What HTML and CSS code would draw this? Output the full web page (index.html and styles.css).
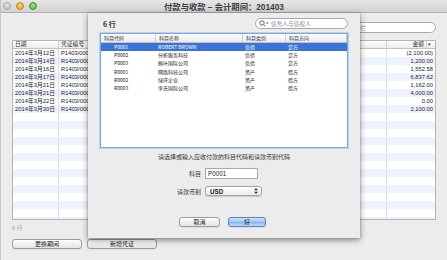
FILE: index.html
```html
<!DOCTYPE html>
<html lang="zh">
<head>
  <meta charset="UTF-8" />
  <title>付款与收款</title>
  <link rel="stylesheet" href="styles.css">
</head>
<body>

  <div class="window">
    <div class="titlebar">
      <div class="lights">
        <span class="light close"></span>
        <span class="light min"></span>
        <span class="light zoom"></span>
      </div>
      <div class="title">付款与收款 – 会计期间：201403</div>
      <div></div>
    </div>

    <div class="content">
      <!-- toolbar -->
      <div class="toolbar">
        <div class="search main-search">
          <svg width="10" height="7" viewBox="0 0 10 7"><circle cx="3" cy="3" r="2.2" fill="none" stroke="#666" stroke-width="0.9"/><path d="M4.6 4.6L6.2 6.2" stroke="#666" stroke-width="1"/><path d="M7 2.5h2.4L8.2 3.9z" fill="#666"/></svg>
          <span>搜索日期或备注所在栏</span>
        </div>
      </div>

      <!-- vouchers -->
      <div class="grid">
        <div class="grid-head">
          <div class="cell">日期</div>
          <div class="cell">凭证编号</div>
          <div class="cell"></div>
          <div class="cell amt">金额</div>
          <div class="cell menu">▾</div>
        </div>
        <div class="grid-body">
          <div class="row"><div class="cell">2014年3月12日</div><div class="cell">P1403/0001</div><div class="cell"></div><div class="cell amt">(2,100.00)</div></div>
          <div class="row"><div class="cell">2014年3月14日</div><div class="cell">R1403/0001</div><div class="cell"></div><div class="cell amt">1,200.00</div></div>
          <div class="row"><div class="cell">2014年3月16日</div><div class="cell">R1403/0002</div><div class="cell"></div><div class="cell amt">1,552.58</div></div>
          <div class="row"><div class="cell">2014年3月17日</div><div class="cell">R1403/0003</div><div class="cell"></div><div class="cell amt">6,837.62</div></div>
          <div class="row"><div class="cell">2014年3月21日</div><div class="cell">R1403/0004</div><div class="cell"></div><div class="cell amt">1,162.00</div></div>
          <div class="row"><div class="cell">2014年3月21日</div><div class="cell">R1403/0005</div><div class="cell"></div><div class="cell amt">4,000.00</div></div>
          <div class="row"><div class="cell">2014年3月22日</div><div class="cell">R1403/0006</div><div class="cell"></div><div class="cell amt">0.00</div></div>
          <div class="row"><div class="cell">2014年3月30日</div><div class="cell">R1403/0007</div><div class="cell"></div><div class="cell amt">2,100.00</div></div>
          <div class="row"><div class="cell"></div><div class="cell"></div><div class="cell"></div><div class="cell"></div></div>
          <div class="row"><div class="cell"></div><div class="cell"></div><div class="cell"></div><div class="cell"></div></div>
          <div class="row"><div class="cell"></div><div class="cell"></div><div class="cell"></div><div class="cell"></div></div>
          <div class="row"><div class="cell"></div><div class="cell"></div><div class="cell"></div><div class="cell"></div></div>
          <div class="row"><div class="cell"></div><div class="cell"></div><div class="cell"></div><div class="cell"></div></div>
          <div class="row"><div class="cell"></div><div class="cell"></div><div class="cell"></div><div class="cell"></div></div>
          <div class="row"><div class="cell"></div><div class="cell"></div><div class="cell"></div><div class="cell"></div></div>
          <div class="row"><div class="cell"></div><div class="cell"></div><div class="cell"></div><div class="cell"></div></div>
          <div class="row"><div class="cell"></div><div class="cell"></div><div class="cell"></div><div class="cell"></div></div>
          <div class="row"><div class="cell"></div><div class="cell"></div><div class="cell"></div><div class="cell"></div></div>
          <div class="row"><div class="cell"></div><div class="cell"></div><div class="cell"></div><div class="cell"></div></div>
          <div class="row"><div class="cell"></div><div class="cell"></div><div class="cell"></div><div class="cell"></div></div>
          <div class="row"><div class="cell"></div><div class="cell"></div><div class="cell"></div><div class="cell"></div></div>
          <div class="row"><div class="cell"></div><div class="cell"></div><div class="cell"></div><div class="cell"></div></div>
        </div>
      </div>

      <div class="count">6 行</div>

      <div class="actions">
        <button class="btn wide">更换期间</button>
        <button class="btn wide">新增凭证</button>
      </div>
    </div>

    <!-- Sheet -->
    <div class="sheet">
      <div class="sheet-head">
        <span class="rows-label">6 行</span>
        <div class="search sheet-search">
          <svg width="10" height="7" viewBox="0 0 10 7"><circle cx="3" cy="3" r="2.2" fill="none" stroke="#555" stroke-width="0.9"/><path d="M4.6 4.6L6.2 6.2" stroke="#555" stroke-width="1"/><path d="M7 2.5h2.4L8.2 3.9z" fill="#555"/></svg>
          <span>债务人与债权人</span>
        </div>
      </div>

      <div class="accounts">
        <div class="acc-head">
          <div>科目代码</div>
          <div>科目名称</div>
          <div>科目类别</div>
          <div>科目方向</div>
        </div>
        <div class="acc-row selected"><div class="code">P0001</div><div>ROBERT BROWN</div><div>负债</div><div>贷方</div></div>
        <div class="acc-row"><div class="code">P0002</div><div>分析服务科技</div><div>负债</div><div>贷方</div></div>
        <div class="acc-row"><div class="code">P0003</div><div>枫叶国际公司</div><div>负债</div><div>贷方</div></div>
        <div class="acc-row"><div class="code">R0001</div><div>网路科技公司</div><div>资产</div><div>借方</div></div>
        <div class="acc-row"><div class="code">R0002</div><div>绿环企业</div><div>资产</div><div>借方</div></div>
        <div class="acc-row"><div class="code">R0003</div><div>李氏国际公司</div><div>资产</div><div>借方</div></div>
      </div>

      <div class="hint">请选择或输入应收付款的科目代码和请款币别代码</div>

      <div class="form">
        <label>科目</label>
        <div class="input">P0001</div>
        <label>请款币别</label>
        <div class="select">
          <span>USD</span>
          <svg width="4" height="6" viewBox="0 0 4 6"><path d="M2 0L4 2.2H0z M2 6L4 3.8H0z" fill="#333"/></svg>
        </div>
      </div>

      <div class="sheet-buttons">
        <button class="btn small">取消</button>
        <button class="btn small default">好</button>
      </div>
    </div>
  </div>

</body>
</html>
```

FILE: styles.css
```css
body {
  margin: 0;
  font-family: 'Liberation Sans', 'Noto Sans CJK SC', sans-serif;
  color: #222;
}

.window {
  position: relative;
  width: 447px;
  height: 260px;
  background: #ececec;
  border-left: 1px solid #c4c4c4;
  box-sizing: border-box;
  overflow: hidden;
}

/* title bar */
.titlebar {
  height: 13px;
  display: grid;
  grid-template-columns: 1fr auto 1fr;
  align-items: center;
  background: linear-gradient(#e6e6e6, #d2d2d2);
  border-bottom: 1px solid #b0b0b0;
  box-sizing: border-box;
}

.lights {
  display: flex;
  gap: 4.7px;
  padding-left: 2.3px;
}

.light {
  width: 8px;
  height: 8px;
  border-radius: 50%;
  box-sizing: border-box;
}

.light.close { background: radial-gradient(circle at 50% 35%, #e4e4e4, #b9b9b9); border: 1px solid #a9a9a9; }
.light.min { background: radial-gradient(circle at 50% 35%, #fbd27a, #ee9b16); border: 1px solid #c8811a; }
.light.zoom { background: radial-gradient(circle at 50% 35%, #a9e08a, #4db238); border: 1px solid #3f9432; }

.title {
  font-size: 8.3px;
  font-weight: 600;
  color: #3c3c3c;
  white-space: nowrap;
}

/* main window */
.content {
  padding: 9px 11px 0 11px;
}

.toolbar {
  display: flex;
  justify-content: flex-end;
  height: 11px;
}

.search {
  display: flex;
  align-items: center;
  gap: 2px;
  height: 11px;
  background: #fff;
  border: 1px solid #a8a8a8;
  border-radius: 6px;
  box-sizing: border-box;
  padding-left: 3px;
  color: #9a9a9a;
  font-size: 5.7px;
  white-space: nowrap;
  overflow: hidden;
}

.main-search {
  width: 143px;
}

.grid {
  margin-top: 7px;
  height: 180px;
  background: #fff;
  border: 1px solid #b4b4b4;
  box-sizing: border-box;
  overflow: hidden;
  font-size: 5.8px;
}

.grid-head {
  display: grid;
  grid-template-columns: 46px 80px 1fr 40px 8px;
  height: 7px;
  line-height: 7px;
  background: linear-gradient(#fdfdfd, #ececec);
  border-bottom: 1px solid #c3c3c3;
  color: #333;
}

.grid-head .cell {
  padding-left: 2px;
  border-right: 1px solid #d0d0d0;
}

.grid-head .amt {
  text-align: right;
  padding-right: 2px;
}

.grid-head .menu {
  border-right: none;
  padding-left: 1px;
  font-size: 5px;
}

.row {
  display: grid;
  grid-template-columns: 46px 80px 1fr 48px;
  height: 8px;
  line-height: 8px;
  white-space: nowrap;
}

.row:nth-child(even) {
  background: #edf3fe;
}

.row .cell {
  padding-left: 2px;
  overflow: hidden;
}

.row .cell:first-child {
  border-right: 1px solid #e0e0e0;
}

.row .cell:nth-child(3) {
  border-right: 1px solid #e0e0e0;
}

.row .amt {
  text-align: right;
  padding-right: 2px;
}

.count {
  margin-top: 4px;
  line-height: 8px;
  font-size: 5.8px;
  color: #a0a0a0;
}

.actions {
  display: flex;
  gap: 5px;
  margin-top: 7px;
}

.btn {
  height: 10px;
  padding: 0;
  font-family: 'Noto Sans CJK SC', sans-serif;
  font-size: 6px;
  line-height: 8px;
  color: #222;
  background: linear-gradient(#ffffff, #f0f0f0 50%, #e4e4e4);
  border: 1px solid #9c9c9c;
  border-radius: 3px;
  box-shadow: 0 0.5px 0 rgba(0, 0, 0, 0.1);
}

.btn.wide { width: 70px; }
.btn.small { width: 41px; }

.btn.default {
  width: 38px;
  background: linear-gradient(#cfe4fb, #9ac4f3 50%, #7fb3ef 51%, #bcdcfb);
  border-color: #5d7fbf;
}

/* sheet */
.sheet {
  position: absolute;
  left: 87px;
  top: 13px;
  width: 272px;
  height: 225px;
  box-sizing: border-box;
  padding: 5px 12px 0 12px;
  background: #ececec;
  box-shadow: 0 2px 6px rgba(0, 0, 0, 0.45), 0 0 1px rgba(0, 0, 0, 0.4);
  font-family: 'Noto Sans CJK SC', sans-serif;
}

.sheet-head {
  display: flex;
  justify-content: space-between;
  align-items: center;
  height: 11px;
  padding-left: 3px;
}

.rows-label {
  font-size: 7px;
  font-weight: 600;
  color: #333;
}

.sheet-search {
  width: 93px;
  color: #8e8e8e;
}

.accounts {
  margin-top: 4px;
  height: 115px;
  background: #fff;
  border: 1px solid #7ea6dc;
  box-shadow: 0 0 0 1px #b9d0f0;
  box-sizing: border-box;
  font-size: 5px;
  overflow: hidden;
}

.acc-head,
.acc-row {
  display: grid;
  grid-template-columns: 55px 87px 43px 1fr;
  white-space: nowrap;
}

.acc-head {
  height: 7.5px;
  line-height: 7.5px;
  background: linear-gradient(#fdfdfd, #ebebeb);
  border-bottom: 1px solid #c3c3c3;
  color: #333;
}

.acc-head div {
  padding-left: 3px;
  border-right: 1px solid #cfcfcf;
}

.acc-row {
  height: 8.4px;
  line-height: 8.4px;
  color: #222;
}

.acc-row div {
  padding-left: 2px;
}

.acc-row .code {
  padding-left: 13px;
}

.acc-row.selected {
  background: #3b74d6;
  color: #fff;
}

.hint {
  margin-top: 5px;
  line-height: 8px;
  font-size: 6px;
  text-align: center;
  color: #333;
}

.form {
  display: grid;
  grid-template-columns: 101px auto;
  column-gap: 4px;
  row-gap: 7px;
  align-items: center;
  justify-items: start;
  margin-top: 7px;
  font-size: 6px;
}

.form label {
  justify-self: end;
  color: #333;
}

.input {
  width: 53px;
  height: 11px;
  box-sizing: border-box;
  padding-left: 2px;
  line-height: 9px;
  background: #fff;
  border: 1px solid #a9a9a9;
  font-family: 'Liberation Sans', sans-serif;
  font-size: 6.3px;
}

.select {
  display: flex;
  justify-content: space-between;
  align-items: center;
  width: 57px;
  height: 10px;
  box-sizing: border-box;
  padding: 0 3px 0 4px;
  background: linear-gradient(#ffffff, #ececec);
  border: 1px solid #a4a4a4;
  border-radius: 3px;
  box-shadow: 0 0.5px 1px rgba(0, 0, 0, 0.15);
  font-family: 'Liberation Sans', sans-serif;
  font-size: 6.3px;
  font-weight: bold;
}

.sheet-buttons {
  display: flex;
  gap: 8px;
  margin-top: 21px;
  padding-left: 79px;
}
```
